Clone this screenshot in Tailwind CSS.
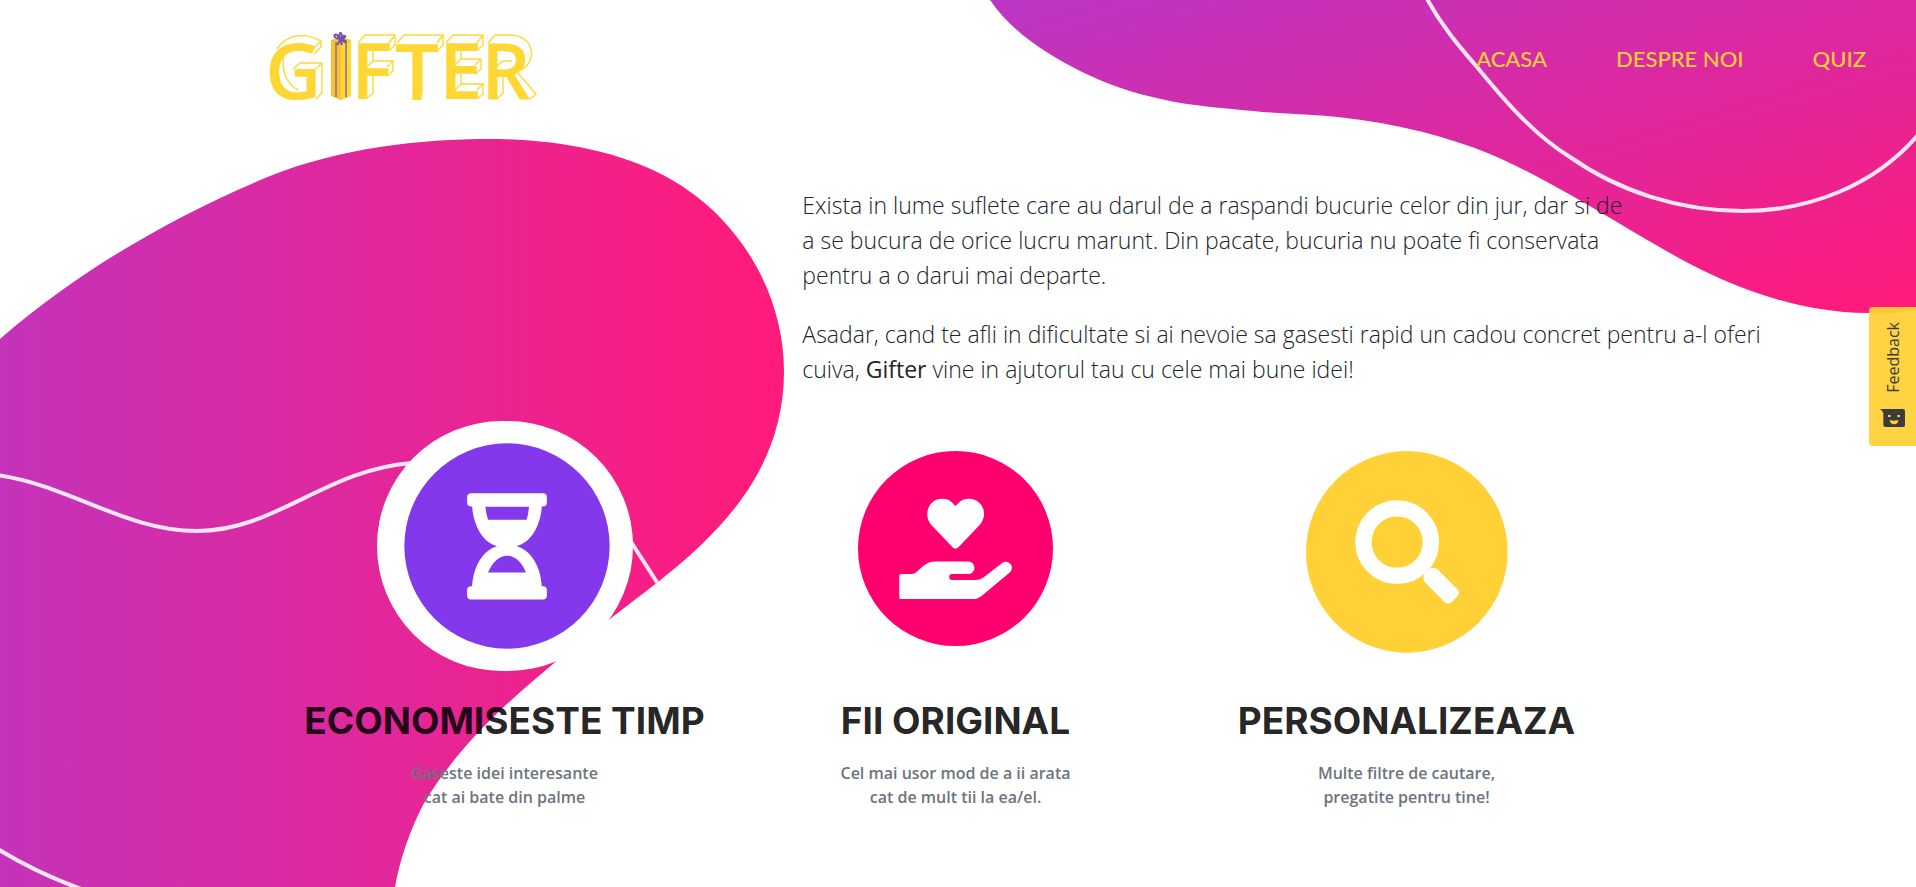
<!DOCTYPE html>
<html lang="ro">
<head>
<meta charset="utf-8">
<meta name="viewport" content="width=device-width, initial-scale=1">
<title>Gifter</title>
<script src="https://cdn.jsdelivr.net/npm/@tailwindcss/browser@4"></script>
</head>
<body class="bg-white">
<div class="relative min-h-screen overflow-hidden font-['Open_Sans',sans-serif]">

  <!-- Decorative blobs -->
  <svg class="absolute left-0 top-0" width="800" height="887" viewBox="0 0 800 887" aria-hidden="true">
    <defs>
      <linearGradient id="gl" gradientUnits="userSpaceOnUse" x1="0" y1="0" x2="760" y2="0">
        <stop offset="0" stop-color="#c433ba"/><stop offset="1" stop-color="#ff1b7b"/>
      </linearGradient>
      <clipPath id="cl"><path d="M0 339C80 269 178 214 270 176C340 148 420 139 490 139C555 139 617 151 663 175C740 215 784 295 784 371C784 470 720 533 658 582C625 608 586 636 553 664C510 700 458 745 423 805C409 832 400 860 395 887H0Z"/></clipPath>
    </defs>
    <g clip-path="url(#cl)">
      <rect width="800" height="887" fill="url(#gl)"/>
      <path d="M-4 475C70 485 125 531 197 531C275 531 325 470 411 463C510 450 590 475 633 545L662 590M-4 848C25 866 50 878 84 890" fill="none" stroke="#fff" stroke-opacity=".88" stroke-width="4"/>
    </g>
  </svg>
  <svg class="absolute right-0 top-0" width="956" height="330" viewBox="960 0 956 330" aria-hidden="true">
    <defs>
      <linearGradient id="gr" gradientUnits="userSpaceOnUse" x1="1000" y1="0" x2="1158" y2="527">
        <stop offset="0" stop-color="#bb36c4"/><stop offset="1" stop-color="#ff1a7b"/>
      </linearGradient>
    </defs>
    <path d="M990 0C1012 32 1045 53 1082 72C1107 84 1132 93 1161 99C1191 106 1222 108 1253 111C1282 114 1310 114 1338 117C1367 120 1395 125 1423 132C1446 138 1468 145 1490 154C1514 164 1536 176 1558 188C1600 211 1650 243 1692 265C1735 287 1775 301 1814 308C1832 311 1850 313 1869 313C1885 314 1900 313 1916 310V0Z" fill="url(#gr)"/>
    <path d="M1426 -3C1441 25 1458 45 1477 67C1491 84 1505 101 1521 117C1536 132 1552 146 1570 157C1620 192 1680 211 1743 211C1810 211 1875 185 1918 135" fill="none" stroke="#fff" stroke-opacity=".88" stroke-width="4"/>
  </svg>

  <div class="relative">
    <header class="flex items-start justify-between pl-[250px] pr-[50px] pt-5">
      <a href="#" aria-label="Gifter" class="block">
        <svg class="overflow-visible" width="300" height="100" viewBox="0 0 300 100" font-family="'Open Sans',sans-serif" font-weight="600" font-size="78">
          <!-- Depth edges, rising up and to the right of each face -->
          <g fill="none" stroke="#fdd835" stroke-width="1.4" stroke-linejoin="round">
            <path d="M27 29C37 14 55 12 71 21V27L64 34M64 28L71 21M34 33C31 50 36 64 48 70"/>
            <path d="M43 49L50 43H72V73L66 79M66 49L72 43"/>
            <path d="M108 23L115 15H145V25L139 31M139 23L145 15M117 47L123 41H143V51L137 56M137 47L143 41M123 31V41M123 56V73L117 78"/>
            <path d="M147 23L154 15H193V25L187 31M187 23L193 15M172 31V74L166 80"/>
            <path d="M196 23L203 15H233V25L227 31M227 23L233 15M205 45L211 39H231V49L225 54M225 45L231 39M211 31V39M211 54V64M205 70L211 64H233V74L227 79M227 70L233 64"/>
            <path d="M238 23L245 15H260C285 15 288 43 270 50M247 46L253 41H262M253 57V73L247 79M268 53L286 74L280 79"/>
          </g>
          <!-- Front faces -->
          <g fill="#fdd835">
            <text x="15" y="79">G</text><text x="101" y="79">F</text><text x="145" y="80">T</text><text x="189" y="79">E</text><text x="231" y="79">R</text>
          </g>
          <!-- Wrapped box standing in for the I -->
          <path d="M81 20L91 17L101 20V76L91 80L81 76Z" fill="#fbc02d"/>
          <path d="M91 23L101 20V76L91 80Z" fill="#fdd835"/>
          <path d="M86 22V77M96 22V77" stroke="#a1887f" stroke-width="2" fill="none"/>
          <path d="M90 19C82 18 84 13 87 15L90 19C87 11 94 11 91 19C94 13 99 17 91 19C99 21 96 25 91 19L87 25M90 19L92 25" stroke="#7550b0" stroke-width="2" fill="none"/>
        </svg>
      </a>
      <nav class="flex gap-[69px] pt-6 font-['Lato',sans-serif] text-[22px] font-medium leading-[30px] text-[#fdd037]">
        <a href="#">ACASA</a>
        <a href="#">DESPRE NOI</a>
        <a href="#">QUIZ</a>
      </nav>
    </header>

    <main>
      <section class="grid grid-cols-12 pt-[68px]">
        <div class="col-span-7 col-start-6 space-y-6 whitespace-nowrap pl-1 text-[23px] font-light leading-[35px] text-[#212529]">
          <p>Exista in lume suflete care au darul de a raspandi bucurie celor din jur, dar si de<br>a se bucura de orice lucru marunt. Din pacate, bucuria nu poate fi conservata<br>pentru a o darui mai departe.</p>
          <p>Asadar, cand te afli in dificultate si ai nevoie sa gasesti rapid un cadou concret pentru a-l oferi<br>cuiva, <span class="font-medium">Gifter</span> vine in ajutorul tau cu cele mai bune idei!</p>
        </div>
      </section>

      <div class="pr-[5px] pt-[34px]">
      <section class="mx-auto grid w-[1353px] max-w-full grid-cols-3 text-center">
        <article class="flex flex-col items-center">
          <div class="flex h-[250px] w-64 items-center justify-center rounded-full bg-white pl-1">
            <svg width="206" height="206" viewBox="132 131 618 620" aria-hidden="true">
              <circle cx="441" cy="441" r="309" fill="#8338ec"/>
              <g fill="#fff"><rect x="321" y="282" width="240" height="40" rx="12"/><rect x="321" y="562" width="240" height="40" rx="12"/>
              <path d="M336 318C338 372 364 428 411 442C364 456 338 510 336 566H546C544 510 518 456 470 442C518 428 544 372 546 318Z"/></g>
              <path d="M376 323H507Q506 345 500 362H384Q378 345 376 323ZM384 521Q405 471 441 470Q478 471 498 521Z" fill="#8338ec"/>
            </svg>
          </div>
          <h2 class="mt-8 font-['Inter',sans-serif] text-[37px] font-bold leading-9 text-black/87">ECONOMISESTE TIMP</h2>
          <p class="mt-[22px] text-base font-semibold leading-6 text-[#6c757d]">Gaseste idei interesante<br>cat ai bate din palme</p>
        </article>
        <article class="flex flex-col items-center">
          <div class="flex h-[250px] items-center justify-center pt-1">
            <svg width="195" height="195" viewBox="83 63 586 586" aria-hidden="true">
              <circle cx="376" cy="356" r="293" fill="#ff006e"/>
              <path fill="#fff" d="M376 228L364 216C350 203 320 203 304 219C288 236 286 264 302 284L368 353Q376 360 384 353L450 284C466 264 466 236 448 219C432 203 404 203 388 216ZM207 440q0-7 8-7H243q8 0 14-5L280 408q16-13 35-13H414a19 19 0 0 1 0 38H366a9 9 0 0 0 0 18H436q13 0 23-7L515 400a18 18 0 0 1 24 28L456 497q-13 11-28 11H215q-8 0-8-8Z"/>
            </svg>
          </div>
          <h2 class="mt-8 font-['Inter',sans-serif] text-[37px] font-bold leading-9 text-black/87">FII ORIGINAL</h2>
          <p class="mt-[22px] text-base font-semibold leading-6 text-[#6c757d]">Cel mai usor mod de a ii arata<br>cat de mult tii la ea/el.</p>
        </article>
        <article class="flex flex-col items-center">
          <div class="flex h-[250px] items-center justify-center pt-3">
            <svg width="202" height="202" viewBox="77 67 605 605" aria-hidden="true">
              <circle cx="379" cy="369" r="302" fill="#ffd137"/>
              <circle cx="350" cy="340" r="101" fill="none" stroke="#fff" stroke-width="49"/>
              <path fill="#fff" d="M449 418q14-3 22 3L531 482q9 10 0 19L514 519q-11 10-22 0L433 460q-6-8-3-22Z"/>
            </svg>
          </div>
          <h2 class="mt-8 font-['Inter',sans-serif] text-[37px] font-bold leading-9 text-black/87">PERSONALIZEAZA</h2>
          <p class="mt-[22px] text-base font-semibold leading-6 text-[#6c757d]">Multe filtre de cautare,<br>pregatite pentru tine!</p>
        </article>
      </section>
      </div>
    </main>
  </div>

  <button type="button" class="absolute right-0 top-[307px] flex h-[139px] w-[47px] flex-col items-center justify-between rounded-l bg-[#ffd137]/95 pb-[19px] pt-[15px] text-[#3c3c3c]">
    <span class="rotate-180 text-base leading-5 [writing-mode:vertical-rl]">Feedback</span>
    <svg width="25" height="18" viewBox="300 357 75 54" aria-hidden="true">
      <path fill="#3c3c3c" d="M300 357H369q6 0 6 6V405q0 6-6 6H316q-6 0-6-6V370Q308 362 300 357Z"/>
      <path fill="#ffd137" d="M324 375h8v6h-8zM352 375h8v6h-8zM329 390q13 5 26 0q-1 13-13 13q-12-1-13-13Z"/>
    </svg>
  </button>
</div>
</body>
</html>
